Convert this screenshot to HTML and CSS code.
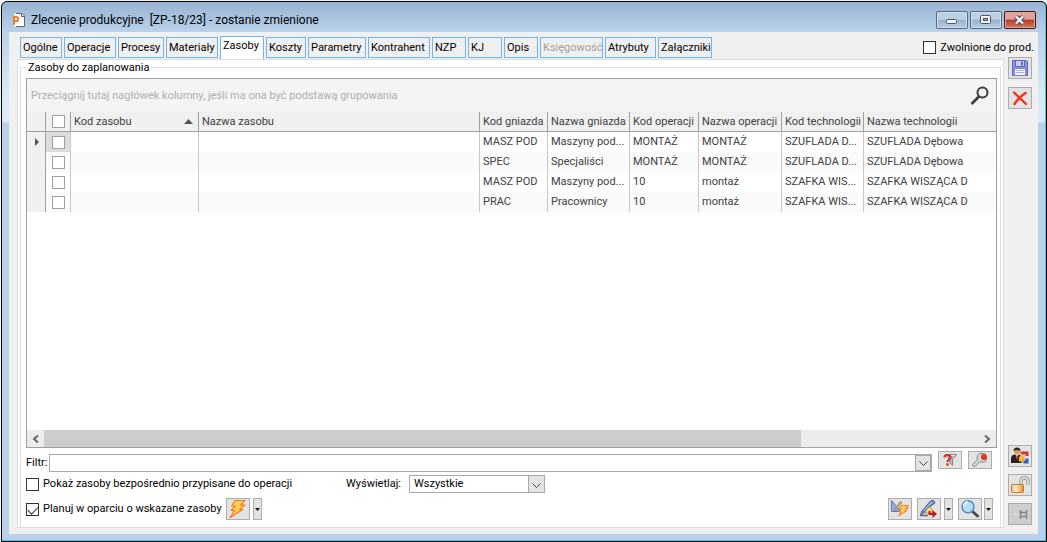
FILE: index.html
```html
<!DOCTYPE html>
<html lang="pl">
<head>
<meta charset="utf-8">
<title>Zlecenie produkcyjne</title>
<link rel="stylesheet" href="styles.css">
</head>
<body>
<div class="window">
  <header class="titlebar">
    <svg class="app-icon" width="14" height="16" viewBox="0 0 14 16"><path d="M2.500 1.500h7.500l2.500 2.500v10.500H2.500z" fill="#fff"/><path d="M4 1.500h6l2.500 2.500v10.500H4" fill="none" stroke="#666"/><path d="M9.500 1.500v3h3" fill="none" stroke="#666"/><path d="M2 12.500V5h2a2 2 0 0 1 0 4.200H2" fill="none" stroke="#ee7a2c" stroke-width="2"/></svg>
    <h1 class="title">Zlecenie produkcyjne  [ZP-18/23] - zostanie zmienione</h1>
    <div class="caption-buttons">
      <button class="cap" aria-label="Minimalizuj"><svg width="14" height="12" viewBox="0 0 14 12"><rect x="1.500" y="5.500" width="10" height="4" rx="1" fill="#f4f4f4" stroke="#4a5568"/></svg></button>
      <button class="cap" aria-label="Maksymalizuj"><svg width="14" height="12" viewBox="0 0 14 12"><rect x="1.500" y="1.500" width="10" height="8" rx="1" fill="#f4f4f4" stroke="#4a5568"/><rect x="4.500" y="4.500" width="4" height="2" fill="#8fabc8" stroke="#4a5568"/></svg></button>
      <button class="cap close" aria-label="Zamknij"><svg width="14" height="12" viewBox="0 0 14 12"><path d="M3 2.500l7 7M10 2.500l-7 7" stroke="#4a4a5c" stroke-width="4.500"/><path d="M3 2.500l7 7M10 2.500l-7 7" stroke="#f4f4f4" stroke-width="2.400"/></svg></button>
    </div>
  </header>

  <div class="client">
    <div class="top-row">
      <nav class="tabs" role="tablist">
        <button class="tab" role="tab">Ogólne</button>
        <button class="tab" role="tab">Operacje</button>
        <button class="tab" role="tab">Procesy</button>
        <button class="tab" role="tab">Materiały</button>
        <button class="tab active" role="tab" aria-selected="true">Zasoby</button>
        <button class="tab" role="tab">Koszty</button>
        <button class="tab" role="tab">Parametry</button>
        <button class="tab" role="tab">Kontrahent</button>
        <button class="tab" role="tab">NZP</button>
        <button class="tab" role="tab">KJ</button>
        <button class="tab" role="tab">Opis</button>
        <button class="tab" role="tab" disabled>Księgowość</button>
        <button class="tab" role="tab">Atrybuty</button>
        <button class="tab" role="tab">Załączniki</button>
      </nav>
      <label class="check"><input type="checkbox">Zwolnione do prod.</label>
    </div>

    <div class="main">
      <div class="panel">
        <fieldset class="group">
          <legend>Zasoby do zaplanowania</legend>
          <div class="grid">
            <div class="group-by">
              <span>Przeciągnij tutaj nagłówek kolumny, jeśli ma ona być podstawą grupowania</span>
              <svg width="20" height="20" viewBox="0 0 20 20" fill="none" stroke="#3c3c3c"><circle cx="12.500" cy="6.500" r="5" stroke-width="2"/><path d="M9 10.500L1.500 18" stroke-width="2.600"/></svg>
            </div>
            <div class="table-area">
              <table class="data">
                <colgroup><col class="c-ind"><col class="c-chk"><col class="c-res"><col class="c-resname"><col class="c-m"><col class="c-l"><col class="c-op"><col class="c-opname"><col class="c-l"><col></colgroup>
                <thead>
                  <tr><th></th><th><input type="checkbox" aria-label="Zaznacz wszystkie"></th><th><div class="sorted">Kod zasobu<svg width="9" height="5" viewBox="0 0 9 5"><path d="M0 5L4.500 0L9 5z" fill="#555"/></svg></div></th><th>Nazwa zasobu</th><th>Kod gniazda</th><th>Nazwa gniazda</th><th>Kod operacji</th><th>Nazwa operacji</th><th>Kod technologii</th><th>Nazwa technologii</th></tr>
                </thead>
                <tbody>
                  <tr class="current"><td><svg width="4" height="8" viewBox="0 0 4 8"><path d="M0 0L4 4L0 8z" fill="#555"/></svg></td><td><input type="checkbox" aria-label="Wiersz 1"></td><td></td><td></td><td>MASZ POD</td><td>Maszyny pod...</td><td>MONTAŻ</td><td>MONTAŻ</td><td>SZUFLADA D...</td><td>SZUFLADA Dębowa</td></tr>
                  <tr><td></td><td><input type="checkbox" aria-label="Wiersz 2"></td><td></td><td></td><td>SPEC</td><td>Specjaliści</td><td>MONTAŻ</td><td>MONTAŻ</td><td>SZUFLADA D...</td><td>SZUFLADA Dębowa</td></tr>
                  <tr><td></td><td><input type="checkbox" aria-label="Wiersz 3"></td><td></td><td></td><td>MASZ POD</td><td>Maszyny pod...</td><td>10</td><td>montaż</td><td>SZAFKA WIS...</td><td>SZAFKA WISZĄCA D</td></tr>
                  <tr><td></td><td><input type="checkbox" aria-label="Wiersz 4"></td><td></td><td></td><td>PRAC</td><td>Pracownicy</td><td>10</td><td>montaż</td><td>SZAFKA WIS...</td><td>SZAFKA WISZĄCA D</td></tr>
                </tbody>
              </table>
            </div>
            <div class="scrollbar">
              <button class="arrow" aria-label="W lewo"><svg width="7" height="8" viewBox="0 0 7 8"><path d="M6 0.500L2 4L6 7.500" fill="none" stroke="#666" stroke-width="2"/></svg></button>
              <div class="track"><div class="thumb"></div></div>
              <button class="arrow" aria-label="W prawo"><svg width="7" height="8" viewBox="0 0 7 8"><path d="M1 0.500L5 4L1 7.500" fill="none" stroke="#666" stroke-width="2"/></svg></button>
            </div>
          </div>

          <div class="filter-row">
            <label for="filter">Filtr:</label>
            <div class="combo"><input id="filter" type="text"><button class="drop" aria-label="Rozwiń"><svg width="9" height="6" viewBox="0 0 9 6"><path d="M0.500 0.500L4.500 4.500L8.500 0.500" fill="none" stroke="#444"/></svg></button></div>
            <button class="tool short" aria-label="Filtr"><svg width="22" height="16" viewBox="0 0 22 16"><path d="M8 2.500h9.500l-4 5v6l-3-3z" fill="#b5bbb9" stroke="#858b8a"/><path d="M10 3.500h6" stroke="#e5eae8"/><path d="M5.500 5.500q0-2.500 3-2.500t3 2.300q0 1.500-1.500 2.300T8.500 10" fill="none" stroke="#d62f20" stroke-width="2.200"/><rect x="7.300" y="11.300" width="2.400" height="2.400" fill="#d62f20"/></svg></button>
            <button class="tool short" aria-label="Konfiguracja"><svg width="22" height="16" viewBox="0 0 22 16"><path d="M3.500 12.500L8.500 7.500Q7 3 11 1.500Q14 .5 17 2.500L13 5L14.500 7.500L18 7Q16.500 11 12.500 10L11 9.500L6 14.500Q4 15 3.500 12.500z" fill="#d5d5d5" stroke="#888"/><circle cx="15" cy="5" r="3" fill="#e2381f"/></svg></button>
          </div>

          <div class="option-row">
            <label class="check"><input type="checkbox">Pokaż zasoby bezpośrednio przypisane do operacji</label>
            <div class="show">
              <label for="show">Wyświetlaj:</label>
              <div class="select-box"><select id="show"><option>Wszystkie</option></select><span class="drop" aria-hidden="true"><svg width="9" height="6" viewBox="0 0 9 6"><path d="M0.500 0.500L4.500 4.500L8.500 0.500" fill="none" stroke="#444"/></svg></span></div>
            </div>
          </div>

          <div class="action-row">
            <label class="check plan-check"><input type="checkbox" checked>Planuj w oparciu o wskazane zasoby</label>
            <div class="split">
              <button class="tool" aria-label="Planuj"><svg width="22" height="20" viewBox="0 0 22 20"><path d="M8 1.500h10L13.500 6H18L12.500 10.500H16L3 18.500L7.500 11.500H4L8.500 7H4.500z" fill="#ffd257" stroke="#f47b20" stroke-width="1.200" stroke-linejoin="round"/></svg></button>
              <button class="tool more" aria-label="Więcej opcji planowania"><svg width="5" height="3" viewBox="0 0 5 3"><path d="M0 0h5L2.500 3z" fill="#111"/></svg></button>
            </div>
            <div class="actions-right">
              <button class="tool" aria-label="Harmonogram"><svg width="22" height="20" viewBox="0 0 22 20"><path d="M2.500 1.500V12.500H12z" fill="#8eafe0" stroke="#5d7fb8"/><path d="M5 11L11 2.500l2 1L7 11.500z" fill="#c8af90" stroke="#8d7760" stroke-width=".7"/><path d="M12.500 6.500h7L16.500 9h3l-4 3h2l-8 5 3-4H10l2.500-3h-2z" fill="#ffd257" stroke="#f47b20" stroke-linejoin="round"/></svg></button>
              <div class="split">
                <button class="tool" aria-label="Edytuj"><svg width="22" height="20" viewBox="0 0 22 20"><path d="M6 12L10 5l4 5 1 4H7z" fill="#ffd968" stroke="#b99a4b"/><path d="M2.500 15.500L4 12L12.500 2q2-1.500 3.500 0t.5 2.500L9.500 9L5.500 14.500z" fill="#6f8fcc" stroke="#4d6396"/><path d="M6 11.500L14 3" stroke="#c3d5f4"/><path d="M2 16.500h8" stroke="#5a6070" stroke-width="1.500"/><path d="M11.500 12v3h4" fill="none" stroke="#c5161d" stroke-width="2"/><path d="M14.500 11L19 15l-4.500 4z" fill="#c5161d"/></svg></button>
                <button class="tool more" aria-label="Więcej opcji edycji"><svg width="5" height="3" viewBox="0 0 5 3"><path d="M0 0h5L2.500 3z" fill="#111"/></svg></button>
              </div>
              <div class="split tight">
                <button class="tool" aria-label="Podgląd"><svg width="22" height="20" viewBox="0 0 22 20"><path d="M13.500 12.500l5 4.500" stroke="#46494e" stroke-width="3" stroke-linecap="round"/><circle cx="9" cy="7.800" r="6" fill="#b7dcf6" stroke="#4f8ac4" stroke-width="1.500"/><path d="M5 7a4 4 0 0 1 4-4" fill="none" stroke="#f2faff" stroke-width="2"/></svg></button>
                <button class="tool more" aria-label="Więcej opcji podglądu"><svg width="5" height="3" viewBox="0 0 5 3"><path d="M0 0h5L2.500 3z" fill="#111"/></svg></button>
              </div>
            </div>
          </div>
        </fieldset>
      </div>

      <aside class="side">
        <div class="side-group top">
          <button class="tool" aria-label="Zapisz"><svg width="22" height="20" viewBox="0 0 22 20"><path d="M3.500 2.500h14l1 1v14h-15z" fill="#8d94dd" stroke="#6068bd"/><rect x="6.500" y="2.500" width="9" height="6" fill="#c9cef5" stroke="#6068bd"/><rect x="12" y="3.500" width="2" height="4" fill="#6068bd"/><rect x="5.500" y="10.500" width="11" height="7" fill="#f3f4ff" stroke="#7a80cc"/><path d="M7 12.500h8M7 14.500h8" stroke="#aeb4d8"/></svg></button>
          <button class="tool" aria-label="Usuń"><svg width="22" height="20" viewBox="0 0 22 20"><path d="M5 4.500L17 16" stroke="#f5261c" stroke-width="2.200" stroke-linecap="round"/><path d="M16.500 5Q10 9 5.500 16" fill="none" stroke="#f5351f" stroke-width="2.600" stroke-linecap="round"/></svg></button>
        </div>
        <div class="side-group">
          <button class="tool" aria-label="Użytkownik"><svg width="22" height="20" viewBox="0 0 22 20"><path d="M2 17V11.500Q3 8.500 6 8.500h3q3 0 3.500 3V17z" fill="#2b2320"/><circle cx="8" cy="5" r="3" fill="#d69a63"/><path d="M4.500 5Q4.500 1.500 8 1.500T11.500 5Q8 3 4.500 5z" fill="#3b2413"/><path d="M6.500 8.500h3L8 13z" fill="#fff"/><path d="M8 9.500v4" stroke="#d32020" stroke-width="1.500"/><path d="M13 8V7h5v3" fill="none" stroke="#df3434" stroke-width="3"/><path d="M10 11l3-2.500 3 3-1 3.500-1 2-2-2-2 1z" fill="#f5b733"/><path d="M18 12.500v3.500h-3.500" fill="none" stroke="#2e5ecb" stroke-width="3"/></svg></button>
          <button class="tool" aria-label="Odblokuj"><svg width="22" height="20" viewBox="0 0 22 20"><defs><linearGradient id="lock" x1="0" x2="1"><stop offset="0" stop-color="#f6b66c"/><stop offset=".35" stop-color="#fff0d4"/><stop offset="1" stop-color="#ef8b28"/></linearGradient></defs><path d="M12 9.500V6Q12 3 15.500 3T19 6v4" fill="none" stroke="#999" stroke-width="3.400"/><path d="M12 9.500V6Q12 3 15.500 3T19 6v4" fill="none" stroke="#e4e4e4" stroke-width="1.600"/><rect x="2.500" y="9.500" width="12" height="8" rx="1" fill="url(#lock)" stroke="#cb7624"/></svg></button>
          <button class="tool pin" aria-label="Przypnij" disabled><svg width="22" height="20" viewBox="0 0 22 20"><path d="M5 10.500h6" stroke="#e0e0e0"/><path d="M11.500 6v9M17.500 6v9" stroke="#888" stroke-width="1.500"/><path d="M12 8.500h5M12 12.500h5" stroke="#888" stroke-width="1.500"/></svg></button>
        </div>
      </aside>
    </div>
  </div>
</div>
</body>
</html>
```
FILE: styles.css
```css
* { box-sizing: border-box; }
body {
  margin: 0;
  height: 100vh;
  padding: 1px 0 0 1px;
  background: #f4f4f4;
  color: #000;
  font: 11px/14px Roboto, sans-serif;
}
button, input, select { font: inherit; color: inherit; margin: 0; }
svg { display: block; flex: none; }

.window {
  height: 100%;
  display: flex;
  flex-direction: column;
  padding: 0 8px 7px 7px;
  border: 1px solid #000;
  border-radius: 6px 6px 0 0;
  box-shadow: inset -1px -1px 0 #2ad1ee;
  background: linear-gradient(#98b4d2, #b9d1ea 30px, #d9e8f6 90px, #dceaf7 120px, #b9d1ea 121px);
}
.titlebar {
  flex: none;
  height: 30px;
  display: flex;
  align-items: center;
  padding: 6px 2px 0 3px;
}
.title {
  flex: 1;
  margin: 0 0 0 5px;
  font: 12px/16px Roboto, sans-serif;
  white-space: pre;
}
.caption-buttons { display: flex; gap: 2px; }
.cap {
  width: 32px;
  height: 18px;
  display: grid;
  place-items: center;
  padding: 0;
  border: 1px solid #56697f;
  border-radius: 2px;
  box-shadow: inset 0 0 0 1px #d3e1ef;
  background: linear-gradient(#bdd0e4 45%, #98b3d0 50%, #b5cce4);
}
.cap.close {
  border-color: #4c1318;
  box-shadow: inset 0 0 0 1px #dfa79f;
  background: linear-gradient(#e0a499 45%, #b93c26 50%, #d07a60);
}

.client {
  flex: 1;
  min-height: 0;
  display: flex;
  flex-direction: column;
  background: #f0f0f0;
}
.top-row {
  flex: none;
  display: flex;
  justify-content: space-between;
  align-items: center;
  height: 27px;
  padding: 4px 4px 0 11px;
}
.tabs {
  display: grid;
  grid-template-columns: 42px 52px 46px 52px 44px 40px 58px 62px 34px 34px 34px 63px 51px 54px;
  column-gap: 2px;
  align-items: center;
}
.tab {
  height: 21px;
  padding: 0 2px;
  border: 1px solid #6cb8f5;
  background: #f0f0f0;
  text-align: left;
  white-space: nowrap;
}
.tab.active { height: 24px; padding-bottom: 4px; background: #fff; }
.tab:disabled { color: #a0a0a0; }

.check { display: flex; align-items: center; gap: 4px; white-space: nowrap; }
input[type="checkbox"] {
  appearance: none;
  flex: none;
  width: 13px;
  height: 13px;
  border: 1px solid #333;
  background: #fff;
}
input[type="checkbox"]:checked::before {
  content: "";
  display: block;
  width: 9px;
  height: 5px;
  margin: 2px 0 0 1px;
  border: solid #333;
  border-width: 0 0 1px 1px;
  transform: rotate(-45deg);
}

.main { flex: 1; min-height: 0; display: flex; padding: 0 6px 6px 8px; }
.panel {
  flex: 1;
  min-width: 0;
  display: flex;
  padding: 0 2px;
  border: 1px solid #dcdcdc;
  background: #fff;
}
.group {
  flex: 1;
  min-width: 0;
  display: flex;
  flex-direction: column;
  margin: 0;
  padding: 3px 3px 3px 5px;
  border: 1px solid #dcdcdc;
  border-bottom: 0;
}
.group legend { padding: 0 2px; line-height: 15px; }

.grid {
  flex: 1;
  min-height: 0;
  display: flex;
  flex-direction: column;
  border: 1px solid #a0a0a0;
  color: #404040;
}
.group-by {
  flex: none;
  height: 33px;
  display: flex;
  align-items: center;
  justify-content: space-between;
  padding: 0 6px 0 4px;
  background: #f3f4f6;
  color: #b0b0b0;
}
.table-area { flex: 1; min-height: 0; overflow: hidden; }
.data { width: 100%; table-layout: fixed; border-collapse: separate; border-spacing: 0; }
.data th, .data td {
  height: 20px;
  padding: 0 3px;
  border-right: 1px solid #c8c8c8;
  text-align: left;
  font-weight: normal;
  white-space: nowrap;
}
.data th { background: #f0f0f0; border-color: #a0a0a0; border-bottom: 1px solid #a0a0a0; }
.data tr > :last-child { border-right: 0; }
.data tr > :first-child { background: #f0f0f0; border-right-color: #a0a0a0; }
.data tr > :first-child svg { margin-left: 5px; }
.data input { display: block; margin: auto; border-color: #a0a0a0; }
.data tbody tr:nth-child(even) { background: #fafafa; }
.current td:nth-child(2) { background: #dcdcdc; }
.sorted { display: flex; justify-content: space-between; align-items: center; padding-right: 2px; }
.c-ind { width: 19px; }
.c-chk { width: 25px; }
.c-res { width: 128px; }
.c-resname { width: 281px; }
.c-m { width: 68px; }
.c-l { width: 82px; }
.c-op { width: 69px; }
.c-opname { width: 83px; }

.scrollbar { flex: none; display: flex; height: 17px; background: #ececec; }
.arrow { width: 17px; display: grid; place-items: center; padding: 0; border: 0; background: none; }
.track { flex: 1; }
.thumb { width: 81%; height: 100%; background: #cdcdcd; }

.filter-row { display: flex; align-items: center; gap: 6px; margin-top: 3px; height: 23px; }
.filter-row label { width: 17px; white-space: nowrap; }
.combo { flex: 1; display: flex; height: 18px; border: 1px solid #a9a9a9; }
.combo input { flex: 1; min-width: 0; padding: 0 3px; border: 0; background: #fff; }
.drop {
  width: 16px;
  display: grid;
  place-items: center;
  padding: 3px 0 0;
  border: 1px solid #a9a9a9;
  background: #e3e3e3;
}
.tool {
  width: 24px;
  height: 22px;
  display: grid;
  place-items: center;
  padding: 0;
  border: 1px solid #adadad;
  background: #e3e3e3;
}
.tool.short { height: 18px; margin-bottom: 6px; }
.tool.more { width: 9px; }
.filter-row .short:last-child { margin-right: 5px; }

.option-row { display: flex; align-items: center; height: 20px; }
.option-row .check { width: 320px; }
.show { display: flex; align-items: center; justify-content: space-between; width: 199px; }
.select-box { position: relative; width: 136px; height: 18px; }
.select-box select {
  appearance: none;
  width: 100%;
  height: 100%;
  padding: 0 20px 0 4px;
  border: 1px solid #a9a9a9;
  border-radius: 0;
  background: #fff;
}
.select-box .drop { position: absolute; inset: 0 0 0 auto; width: 17px; pointer-events: none; }

.action-row { display: flex; align-items: center; height: 30px; }
.plan-check { min-width: 200px; }
.split { display: flex; gap: 3px; }
.split.tight { gap: 2px; }
.actions-right { display: flex; gap: 5px; margin: 0 4px 0 auto; }

.side { display: flex; flex-direction: column; justify-content: space-between; padding: 0 0 3px 4px; }
.side-group { display: flex; flex-direction: column; gap: 7px; }
.side-group.top { gap: 8px; margin-top: -2px; }
.pin { background: #cdcdcd; }
```
